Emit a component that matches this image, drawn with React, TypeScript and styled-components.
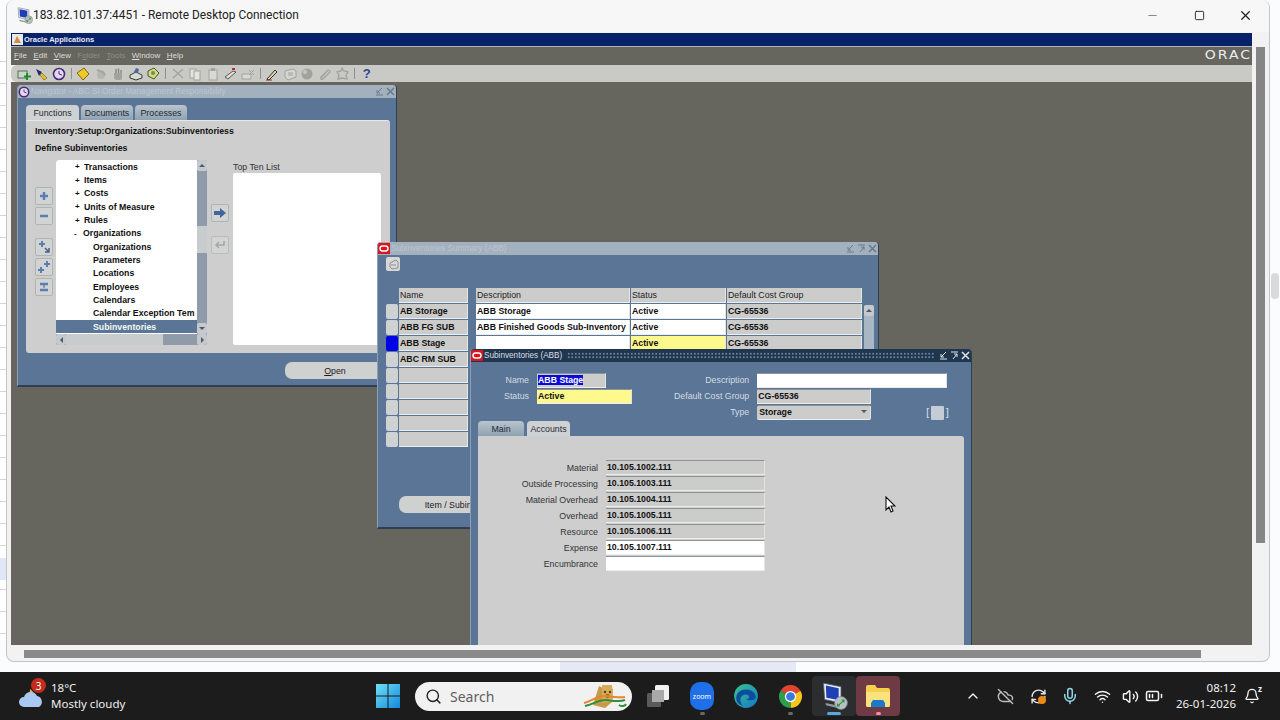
import React from 'react';
import styled, { createGlobalStyle } from 'styled-components';
import { ChevronUp, CloudOff, Mic, Minus, RefreshCw, Search, Square, Volume2, Wifi, X, BatteryMedium, Bell } from 'lucide-react';

const FORM_FONT = '"Liberation Sans", Arial, sans-serif';
const UI_FONT = '"Noto Sans", "Open Sans", sans-serif';

const TREE_ROWS = [
  { text: 'Transactions', kind: 'closed' },
  { text: 'Items', kind: 'closed' },
  { text: 'Costs', kind: 'closed' },
  { text: 'Units of Measure', kind: 'closed' },
  { text: 'Rules', kind: 'closed' },
  { text: 'Organizations', kind: 'open' },
  { text: 'Organizations', kind: 'child' },
  { text: 'Parameters', kind: 'child' },
  { text: 'Locations', kind: 'child' },
  { text: 'Employees', kind: 'child' },
  { text: 'Calendars', kind: 'child' },
  { text: 'Calendar Exception Tem', kind: 'child' },
  { text: 'Subinventories', kind: 'selected' },
];

const SUMMARY_ROWS = [
  { name: 'AB Storage', description: 'ABB Storage', status: 'Active', cost: 'CG-65536' },
  { name: 'ABB FG SUB', description: 'ABB Finished Goods Sub-Inventory', status: 'Active', cost: 'CG-65536' },
  { name: 'ABB Stage', description: '', status: 'Active', cost: 'CG-65536', current: true },
  { name: 'ABC RM SUB', description: '', status: '', cost: '' },
  { name: '', description: '', status: '', cost: '' },
  { name: '', description: '', status: '', cost: '' },
  { name: '', description: '', status: '', cost: '' },
  { name: '', description: '', status: '', cost: '' },
  { name: '', description: '', status: '', cost: '' },
];

const ACCOUNTS = [
  { label: 'Material', value: '10.105.1002.111' },
  { label: 'Outside Processing', value: '10.105.1003.111' },
  { label: 'Material Overhead', value: '10.105.1004.111' },
  { label: 'Overhead', value: '10.105.1005.111' },
  { label: 'Resource', value: '10.105.1006.111' },
  { label: 'Expense', value: '10.105.1007.111', editable: true },
  { label: 'Encumbrance', value: '', editable: true },
];

const TOOLBAR: (string | null)[] = ['new', 'torch', 'clock', null, 'folder', 'save', 'hand', 'print', 'tag', null, 'cut', 'copy', 'paste', 'pen', 'erase', null, 'edit', 'box', 'ball', 'clip', 'gear', null, 'help'];

function ToolGlyph({ name }: { name: string }) {
  const dim = '#a3a39d';
  const art: Record<string, React.ReactNode> = {
    new: (<><rect x="1" y="4" width="9" height="7" fill="#c8d8c8" stroke="#55705a" /><path d="M10 6v7M7 9.500h7" stroke="#1c8f2c" strokeWidth="2" /></>),
    torch: (<><path d="M2 2l6 3-3 4z" fill="#2a2a70" /><path d="M6 8l4 5 3-2-5-5z" fill="#e5c030" stroke="#6b5a10" strokeWidth=".6" /></>),
    clock: (<><circle cx="7" cy="7" r="5.500" fill="#e4d8ee" stroke="#4a2a78" strokeWidth="1.600" /><path d="M7 4v3l3 1" stroke="#4a2a78" fill="none" /></>),
    folder: (<><path d="M1 6l7-5 5 6-6 6z" fill="#f0c828" stroke="#7a6510" /></>),
    save: (<><circle cx="7" cy="8" r="4" fill="#b6b6b0" /><path d="M3 3l6 2 2 3" stroke={dim} strokeWidth="2" fill="none" /></>),
    hand: (<><path d="M3 6h8v5a2 2 0 0 1-2 2H6a3 3 0 0 1-3-3z" fill={dim} /><path d="M5 6V2M7.500 6V1.500M10 6V3" stroke="#8b8b85" strokeWidth="1.500" /></>),
    print: (<><path d="M1 8l6-3 6 3v3l-6 2-6-2z" fill="#d8d8d4" stroke="#3a3a3a" /><path d="M5 5l2-4 3 1-1 4z" fill="#4a68a8" /></>),
    tag: (<><path d="M2 4l6-3 5 5-5 6-6-3z" fill="#dcd878" stroke="#3c5a38" /><circle cx="7" cy="6" r="2" fill="#6a9060" /></>),
    cut: (<><path d="M2 2l10 9M12 2L2 11" stroke={dim} strokeWidth="1.300" /></>),
    copy: (<><rect x="2" y="2" width="6" height="9" fill="#e4e4e0" stroke={dim} /><rect x="6" y="4" width="6" height="9" fill="#e4e4e0" stroke={dim} /></>),
    paste: (<><rect x="3" y="3" width="8" height="10" fill="#d8d8d4" stroke={dim} /><rect x="5" y="1" width="4" height="3" fill={dim} /></>),
    pen: (<><path d="M2 10l8-6 3 1-8 7z" fill="#ece0a8" stroke="#55558a" /><path d="M9 2h3" stroke="#b03030" strokeWidth="2" /></>),
    erase: (<><path d="M1 7h9v5H1z" fill="#d8d8d4" stroke={dim} /><path d="M8 3l5 5M13 3L8 8" stroke={dim} /></>),
    edit: (<><path d="M2 12l8-9 2 2-8 8z" fill="#e0d48c" stroke="#30305a" /><path d="M1 13h6" stroke="#7a3a2a" /></>),
    box: (<><path d="M2 4l8-2 3 2v6l-8 3-3-3z" fill="#d4d4d0" stroke={dim} /><path d="M5 6h5M5 8h5" stroke={dim} /></>),
    ball: (<><circle cx="7" cy="7" r="5.500" fill="#a2a29c" /><circle cx="5" cy="5" r="2" fill="#c8c8c2" /></>),
    clip: (<><path d="M3 11l7-8a2 2 0 0 1 2 2l-7 7a1 1 0 0 1-2-2l6-6" stroke={dim} strokeWidth="1.200" fill="none" /></>),
    gear: (<><path d="M7 1l2 3 4 1-2 3 1 4-5-1-4 1 1-4-2-3 4-1z" fill="none" stroke={dim} strokeWidth="1.300" /></>),
  };
  return <svg width="14" height="14" viewBox="0 0 14 14">{art[name]}</svg>;
}

function TitleButtons({ full, dark }: { full?: boolean; dark?: boolean }) {
  const tone = dark ? '#dfe5ec' : '#697a8a';
  return (
    <TitleButtonRow>
      <svg width="9" height="9" viewBox="0 0 9 9"><path d="M1 8h7M2 6l5-5M2 6V3M2 6h3" stroke={tone} fill="none" /></svg>
      {full && <svg width="9" height="9" viewBox="0 0 9 9"><path d="M1 1h7M3 8l4-5M7 3v3M7 3H4" stroke={tone} fill="none" /></svg>}
      <svg width="9" height="9" viewBox="0 0 9 9"><path d="M1 1l7 7M8 1L1 8" stroke={tone} strokeWidth="1.500" /></svg>
    </TitleButtonRow>
  );
}

function OracleBadge() {
  return (
    <svg width="12" height="11" viewBox="0 0 12 11">
      <rect width="12" height="11" fill="#d8141e" />
      <rect x="2" y="3" width="8" height="5" rx="2.500" fill="none" stroke="#fff" strokeWidth="1.400" />
    </svg>
  );
}

function RdpGlyph({ size }: { size: number }) {
  return (
    <svg width={size} height={size} viewBox="0 0 24 24">
      <path d="M3 1l15 3v14L4 15z" fill="#e8eef5" stroke="#56606c" strokeWidth=".7" />
      <path d="M5 3l11 2.400v10L5.500 13.500z" fill="#1f3fb4" />
      <path d="M5 18l9 2v2l-9-2z" fill="#8e98a4" />
      <circle cx="18" cy="18" r="5.500" fill="#b8c0c4" stroke="#75807f" strokeWidth=".6" />
      <path d="M15.500 20l5-4M18.500 15.500h2v2M17 20.500h-2v-2" stroke="#2f8f3a" fill="none" strokeWidth="1" />
    </svg>
  );
}

function ScrollArrow({ dir }: { dir: 'up' | 'down' | 'left' | 'right' }) {
  return <ArrowBox><Caret $dir={dir} /></ArrowBox>;
}

function Navigator() {
  return (
    <NavigatorWindow>
      <WindowTitle>
        <svg width="12" height="12" viewBox="0 0 14 14"><circle cx="7" cy="7" r="5.500" fill="#e4d8ee" stroke="#4a2a78" strokeWidth="1.800" /><path d="M7 4v3l3 1" stroke="#4a2a78" fill="none" /></svg>
        <TitleText>Navigator - ABC SI Order Management Responsibility</TitleText>
        <TitleButtons />
      </WindowTitle>
      <NavBody>
        <TabRow>
          <Tab $active $width={53}>Functions</Tab>
          <Tab $width={52}>Documents</Tab>
          <Tab $width={52}>Processes</Tab>
        </TabRow>
        <NavPanel>
          <NavHeading>Inventory:Setup:Organizations:Subinventoriess</NavHeading>
          <NavHeading>Define Subinventories</NavHeading>
          <NavColumns>
            <SideButtons>
              <IconButton><svg width="10" height="10" viewBox="0 0 10 10"><path d="M5 1v8M1 5h8" stroke="#5b7db0" strokeWidth="2.500" /></svg></IconButton>
              <IconButton><svg width="10" height="10" viewBox="0 0 10 10"><path d="M1 5h8" stroke="#5b7db0" strokeWidth="2.500" /></svg></IconButton>
              <SideSpacer />
              <IconButton><svg width="14" height="14" viewBox="0 0 14 14"><path d="M5 1v6M2 4h6" stroke="#5b7db0" strokeWidth="2" /><path d="M8 8l4 4M12 8v4H8" stroke="#45638f" strokeWidth="1.500" fill="none" /></svg></IconButton>
              <IconButton><svg width="14" height="14" viewBox="0 0 14 14"><path d="M10 1v6M7 4h6M4 7v6M1 10h6" stroke="#5b7db0" strokeWidth="2" /></svg></IconButton>
              <IconButton><svg width="14" height="14" viewBox="0 0 14 14"><path d="M3 4h8M3 10h8" stroke="#5b7db0" strokeWidth="2.500" /><path d="M7 5v3" stroke="#45638f" /></svg></IconButton>
            </SideButtons>
            <TreeBox>
              <TreeMain>
                <TreeList>
                  {TREE_ROWS.map((row, i) => (
                    <TreeRow key={i} $kind={row.kind}>
                      {row.kind === 'closed' && <Marker>+</Marker>}
                      {row.kind === 'open' && <Marker>-</Marker>}
                      {row.text}
                    </TreeRow>
                  ))}
                </TreeList>
                <VerticalBar>
                  <ScrollArrow dir="up" />
                  <BarTrack />
                  <BarThumb />
                  <BarTrack $grow />
                  <ScrollArrow dir="down" />
                </VerticalBar>
              </TreeMain>
              <HorizontalBar>
                <ScrollArrow dir="left" />
                <HorizontalThumb />
                <ScrollArrow dir="right" />
              </HorizontalBar>
            </TreeBox>
            <MoveButtons>
              <IconButton><svg width="14" height="12" viewBox="0 0 14 12"><path d="M1 4h6V1l6 5-6 5V8H1z" fill="#41669c" /></svg></IconButton>
              <IconButton $dim><svg width="12" height="10" viewBox="0 0 12 10"><path d="M10 1v4H3M5 2L2 5l3 3" stroke="#a6a6a6" strokeWidth="1.500" fill="none" /></svg></IconButton>
            </MoveButtons>
            <TopTen>
              <TopTenLabel>Top Ten List</TopTenLabel>
              <TopTenBox />
            </TopTen>
          </NavColumns>
        </NavPanel>
        <NavFooter><PillButton $width={100}><u>O</u>pen</PillButton></NavFooter>
      </NavBody>
    </NavigatorWindow>
  );
}

function Summary() {
  return (
    <SummaryWindow>
      <WindowTitle>
        <OracleBadge />
        <TitleText>Subinventories Summary (ABB)</TitleText>
        <TitleButtons full />
      </WindowTitle>
      <SummaryBody>
        <FolderButton>
          <svg width="11" height="11" viewBox="0 0 11 11"><path d="M2 4l6-3 2 2v6l-6 1-2-2z" fill="#d8d8d8" stroke="#8e8e8e" /><path d="M3 6h5" stroke="#8e8e8e" /></svg>
        </FolderButton>
        <TableArea>
          <div>
            <TableRow>
              <span />
              <HeaderCell>Name</HeaderCell>
              <HeaderCell $spaced>Description</HeaderCell>
              <HeaderCell>Status</HeaderCell>
              <HeaderCell>Default Cost Group</HeaderCell>
            </TableRow>
            {SUMMARY_ROWS.map((row, i) => {
              const filled = i < 3;
              return (
                <TableRow key={i}>
                  <RowMark $current={row.current} />
                  <Cell $tone="gray">{row.name}</Cell>
                  {filled ? <Cell $spaced $tone="white">{row.description}</Cell> : <span />}
                  {filled ? <Cell $tone={row.current ? 'yellow' : 'white'}>{row.status}</Cell> : <span />}
                  {filled ? <Cell $tone="gray">{row.cost}</Cell> : <span />}
                </TableRow>
              );
            })}
          </div>
          <TableBar><ScrollArrow dir="up" /></TableBar>
        </TableArea>
        <ItemButton $width={134} $top={48}>Item / Subinventories</ItemButton>
      </SummaryBody>
    </SummaryWindow>
  );
}

function Detail() {
  return (
    <DetailWindow>
      <ActiveTitle>
        <OracleBadge />
        <ActiveTitleText>Subinventories (ABB)</ActiveTitleText>
        <Dots />
        <TitleButtons full dark />
      </ActiveTitle>
      <DetailBody>
        <TopForm>
          <FormColumn $width={172}>
            <FormRow>
              <FormLabel $width={58}>Name</FormLabel>
              <Field $width={69} $tone="gray"><Selected>ABB Stage</Selected></Field>
            </FormRow>
            <FormRow>
              <FormLabel $width={58}>Status</FormLabel>
              <Field $width={95} $tone="yellow">Active</Field>
            </FormRow>
          </FormColumn>
          <FormColumn $width={329}>
            <FormRow>
              <FormLabel $width={109}>Description</FormLabel>
              <Field $width={190} $tone="white" />
            </FormRow>
            <FormRow>
              <FormLabel $width={109}>Default Cost Group</FormLabel>
              <Field $width={114} $tone="gray">CG-65536</Field>
            </FormRow>
            <FormRow>
              <FormLabel $width={109}>Type</FormLabel>
              <SelectField $width={114} $tone="gray">Storage<Caret $dir="down" /></SelectField>
              <FlexBracket>[<FlexBox />]</FlexBracket>
            </FormRow>
          </FormColumn>
        </TopForm>
        <DetailTabs>
          <Tab $width={46}>Main</Tab>
          <Tab $active $width={43}>Accounts</Tab>
        </DetailTabs>
        <AccountsPanel>
          {ACCOUNTS.map(a => (
            <FormRow key={a.label}>
              <PanelLabel>{a.label}</PanelLabel>
              <Field $width={159} $tone={a.editable ? 'white' : 'gray'}>{a.value}</Field>
            </FormRow>
          ))}
        </AccountsPanel>
      </DetailBody>
    </DetailWindow>
  );
}

function Taskbar() {
  return (
    <Bar>
      <Weather>
        <WeatherIcon>
          <svg width="28" height="28" viewBox="0 0 28 28">
            <path d="M3 17c5 0 9-4 9-10 3 2 5 5 4 9z" fill="#f0b030" />
            <path d="M6 25a5 5 0 0 1 0-10 7 7 0 0 1 13-1 6 6 0 0 1 2 11z" fill="#a9c9f2" />
          </svg>
          <WeatherBadge>3</WeatherBadge>
        </WeatherIcon>
        <WeatherText>
          <span>18°C</span>
          <span>Mostly cloudy</span>
        </WeatherText>
      </Weather>
      <svg width="24" height="24" viewBox="0 0 24 24">
        <defs><linearGradient id="win" x1="0" y1="0" x2="1" y2="1"><stop offset="0" stopColor="#6fe0f5" /><stop offset="1" stopColor="#1488dc" /></linearGradient></defs>
        <path d="M0 0h11.500v11.500H0zM12.500 0H24v11.500H12.500zM0 12.500h11.500V24H0zM12.500 12.500H24V24H12.500z" fill="url(#win)" />
      </svg>
      <SearchPill>
        <Search size={17} color="#222" strokeWidth={2} />
        <SearchText>Search</SearchText>
        <svg width="46" height="27" viewBox="0 0 46 27">
          <path d="M17 3l4 2 5-1 5 2-1 13-7 6-12-3z" fill="#c69a48" />
          <path d="M20 2h10l1 16-11 2z" fill="#d6ac5a" />
          <circle cx="23" cy="9" r="1.200" fill="#5d3f18" /><circle cx="28" cy="9" r="1.200" fill="#5d3f18" /><circle cx="25.500" cy="13" r="2" fill="#8a5d25" />
          <path d="M2 20c8-2 14-8 22-7 7 1 14 2 19 1" stroke="#e8862c" strokeWidth="2" fill="none" />
          <path d="M3 23c9-2 14-7 22-6 7 1 13 2 18 0" stroke="#2f8f3a" strokeWidth="2" fill="none" />
          <path d="M37 22c3 2 6 1 7-1" stroke="#2f8f3a" strokeWidth="2" fill="none" />
        </svg>
      </SearchPill>
      <Apps>
        <AppSlot>
          <svg width="24" height="24" viewBox="0 0 24 24">
            <rect x="1" y="9" width="14" height="14" rx="1.500" fill="#5a5a5a" />
            <rect x="9" y="1" width="14" height="15" rx="1.500" fill="#f2f2f2" />
            <rect x="6" y="6" width="12" height="12" fill="#a9a9a9" />
          </svg>
        </AppSlot>
        <AppSlot $pip="#6a6a6a">
          <ZoomTile>zoom</ZoomTile>
        </AppSlot>
        <AppSlot>
          <svg width="26" height="26" viewBox="0 0 24 24">
            <defs><linearGradient id="edge" x1="0" y1="0" x2="1" y2="1"><stop offset="0" stopColor="#38c58e" /><stop offset="1" stopColor="#1578c9" /></linearGradient></defs>
            <circle cx="12" cy="12" r="11" fill="url(#edge)" />
            <path d="M3 14c0-5 4-8 9-8 5 0 9 3 9 7 0 2-2 3-5 3-2 0-4-1-4-1 2 0 3-1 3-2 0-2-3-3-5-2-4 1-4 6-1 10-3-1-6-3-6-7z" fill="#0e4c9c" />
          </svg>
        </AppSlot>
        <AppSlot $pip="#6a6a6a">
          <svg width="25" height="25" viewBox="0 0 24 24">
            <path d="M12 12L2.470 6.500A11 11 0 0 1 21.530 6.500Z" fill="#e0432f" />
            <path d="M12 12L21.530 6.500A11 11 0 0 1 12 23Z" fill="#f7c51c" />
            <path d="M12 12L12 23A11 11 0 0 1 2.470 6.500Z" fill="#2f9e4c" />
            <circle cx="12" cy="12" r="5.400" fill="#fff" /><circle cx="12" cy="12" r="4.200" fill="#3b78e0" />
          </svg>
        </AppSlot>
        <AppSlot $tile="#2b2d2f" $pip="#5aa8dc" $wide>
          <RdpGlyph size={28} />
        </AppSlot>
        <AppSlot $tile="#6e3b44" $pip="#f08fa8">
          <svg width="26" height="24" viewBox="0 0 26 24">
            <path d="M1 3a2 2 0 0 1 2-2h7l2 3h11a2 2 0 0 1 2 2v15a2 2 0 0 1-2 2H3a2 2 0 0 1-2-2z" fill="#f6cf4c" />
            <path d="M1 8h24v13a2 2 0 0 1-2 2H3a2 2 0 0 1-2-2z" fill="#fbe27c" />
            <path d="M8 16h10l2 3v4H6v-4z" fill="#1a79c8" />
          </svg>
        </AppSlot>
      </Apps>
      <Tray>
        <TraySlot $width={32}><ChevronUp size={16} color="#f2f2f2" /></TraySlot>
        <TraySlot $width={33}><CloudOff size={17} color="#bdbdbd" /></TraySlot>
        <TraySlot $width={32}><RefreshCw size={17} color="#e6e6e6" /><SyncDot /></TraySlot>
        <TraySlot $width={32}><Mic size={18} color="#8fd8e8" /></TraySlot>
        <TraySlot $width={32}><Wifi size={17} color="#f2f2f2" /></TraySlot>
        <TraySlot $width={24}><Volume2 size={17} color="#f2f2f2" /></TraySlot>
        <TraySlot $width={24}><BatteryMedium size={18} color="#f2f2f2" /></TraySlot>
      </Tray>
      <Clock>
        <span>08:12</span>
        <span>26-01-2026</span>
      </Clock>
      <TraySlot $width={28}><Bell size={16} color="#f2f2f2" /><BellMark>z</BellMark></TraySlot>
    </Bar>
  );
}

export default function App() {
  return (
    <Screen>
      <GlobalStyle />
      <Desktop>
        <SheetTicks><SheetCell /></SheetTicks>
        <PageThumb />
        <BottomTint />
        <RdpWindow>
          <RdpTitle>
            <RdpGlyph size={17} />
            <RdpCaption>183.82.101.37:4451 - Remote Desktop Connection</RdpCaption>
            <RdpControls>
              <RdpControl><Minus size={13} color="#8a8a8a" /></RdpControl>
              <RdpControl><Square size={11} color="#222" /></RdpControl>
              <RdpControl><X size={15} color="#222" /></RdpControl>
            </RdpControls>
          </RdpTitle>
          <RdpClient>
            <Viewport>
              <OracleTitle>
                <svg width="11" height="11" viewBox="0 0 11 11"><rect width="11" height="11" fill="#e8e8e8" /><path d="M2 9l3-7 4 7z" fill="#d68a3c" /></svg>
                Oracle Applications
              </OracleTitle>
              <MenuBar>
                <MenuItem><u>F</u>ile</MenuItem>
                <MenuItem><u>E</u>dit</MenuItem>
                <MenuItem><u>V</u>iew</MenuItem>
                <MenuItem $dim>F<u>o</u>lder</MenuItem>
                <MenuItem $dim><u>T</u>ools</MenuItem>
                <MenuItem><u>W</u>indow</MenuItem>
                <MenuItem><u>H</u>elp</MenuItem>
                <OracleLogo>ORAC</OracleLogo>
              </MenuBar>
              <Toolbar>
                {TOOLBAR.map((name, i) =>
                  name === null ? <ToolSeparator key={i} /> :
                  name === 'help' ? <ToolSlot key={i}><HelpMark>?</HelpMark></ToolSlot> :
                  <ToolSlot key={i}><ToolGlyph name={name} /></ToolSlot>
                )}
              </Toolbar>
              <Canvas>
                <Navigator />
                <Summary />
                <Detail />
                <Pointer>
                  <svg width="11" height="17" viewBox="0 0 11 17"><path d="M1 1v13l3-3 2 5 2-1-2-5h4z" fill="#fff" stroke="#111" strokeWidth="1.100" /></svg>
                </Pointer>
              </Canvas>
            </Viewport>
            <VerticalGutter><GutterBar /></VerticalGutter>
          </RdpClient>
          <HorizontalGutter><GutterBarWide /></HorizontalGutter>
        </RdpWindow>
      </Desktop>
      <Taskbar />
    </Screen>
  );
}

const GlobalStyle = createGlobalStyle`
  html, body { margin: 0; padding: 0; background: #fff; }
  body { font-family: ${FORM_FONT}; overflow: hidden; }
  * { box-sizing: border-box; }
`;

const Screen = styled.div`
  width: 1280px;
  height: 720px;
  display: flex;
  flex-direction: column;
  overflow: hidden;
`;

const Desktop = styled.div`
  position: relative;
  height: 672px;
  background: #fbfcfd;
`;

const SheetTicks = styled.div`
  position: absolute;
  left: 0;
  top: 40px;
  width: 8px;
  height: 600px;
  background: repeating-linear-gradient(to bottom, #fff 0 21px, #d6d6d6 21px 22px);
`;

const SheetCell = styled.div`
  position: absolute;
  left: 0;
  top: 518px;
  width: 8px;
  height: 22px;
  background: #dfe6f8;
`;

const PageThumb = styled.div`
  position: absolute;
  left: 1271px;
  top: 273px;
  width: 8px;
  height: 26px;
  border-radius: 4px;
  background: #d8dadc;
`;

const BottomTint = styled.div`
  position: absolute;
  left: 560px;
  top: 662px;
  width: 236px;
  height: 10px;
  background: #e4e9f5;
`;

const RdpWindow = styled.div`
  position: relative;
  margin-left: 6px;
  width: 1264px;
  height: 662px;
  display: flex;
  flex-direction: column;
  background: #f2f2f2;
  border: 1px solid #c4c4c4;
  border-top: 0;
  border-radius: 8px;
  overflow: hidden;
`;

const RdpTitle = styled.div`
  height: 32px;
  flex: none;
  display: flex;
  align-items: center;
  padding: 0 0 2px 9px;
  background: #f7f7f7;
`;

const RdpCaption = styled.span`
  font: 11.900px Roboto, ${UI_FONT};
  color: #222;
`;

const RdpControls = styled.div`
  margin-left: auto;
  display: flex;
`;

const RdpControl = styled.span`
  width: 46.500px;
  height: 30px;
  display: flex;
  align-items: center;
  justify-content: center;
`;

const RdpClient = styled.div`
  flex: 1;
  min-height: 0;
  display: flex;
  padding-left: 4px;
`;

const Viewport = styled.div`
  width: 1241px;
  display: flex;
  flex-direction: column;
`;

const VerticalGutter = styled.div`
  flex: 1;
  padding: 15px 0 0 4px;
`;

const GutterBar = styled.div`
  width: 9px;
  height: 496px;
  background: #858585;
`;

const HorizontalGutter = styled.div`
  height: 16px;
  flex: none;
  padding: 5px 0 0 17px;
`;

const GutterBarWide = styled.div`
  width: 1177px;
  height: 8px;
  background: #8a8a8a;
`;

const OracleTitle = styled.div`
  height: 13px;
  flex: none;
  margin-top: 1px;
  display: flex;
  align-items: center;
  gap: 1px;
  padding-left: 1px;
  background: #08226a;
  color: #e8ecf5;
  font: bold 7.500px ${FORM_FONT};
`;

const MenuBar = styled.div`
  height: 19px;
  flex: none;
  display: flex;
  align-items: center;
  border-top: 1px solid #b4b4b0;
  padding: 0 0 2px 3px;
  background: #66665f;
  overflow: hidden;
`;

const MenuItem = styled.span<{ $dim?: boolean }>`
  margin-right: 6.500px;
  font: 8px ${FORM_FONT};
  color: ${p => (p.$dim ? '#8e8e88' : '#dcdcd8')};
`;

const OracleLogo = styled.span`
  margin-left: auto;
  font: 14px "DejaVu Sans", sans-serif;
  letter-spacing: 2px;
  color: #eceff0;
  transform: scaleY(0.85);
`;

const Toolbar = styled.div`
  height: 17px;
  flex: none;
  display: flex;
  align-items: center;
  padding-left: 4px;
  background: #c9c9c5;
  border-radius: 6px 0 0 6px;
`;

const ToolSlot = styled.span`
  width: 17.500px;
  height: 15px;
  flex: none;
  display: flex;
  align-items: center;
  justify-content: center;
`;

const ToolSeparator = styled.span`
  width: 1px;
  height: 11px;
  flex: none;
  margin: 0 3px;
  background: #92928c;
`;

const HelpMark = styled.span`
  font: bold 13px ${FORM_FONT};
  color: #28489a;
`;

const Canvas = styled.div`
  position: relative;
  flex: 1;
  min-height: 0;
  background: #66665f;
  overflow: hidden;
`;

const Pointer = styled.div`
  position: absolute;
  left: 874px;
  top: 414px;
  height: 17px;
`;

const BaseWindow = styled.div`
  position: absolute;
  display: flex;
  flex-direction: column;
  background: #5a7595;
  border-radius: 4px 4px 0 0;
  border-right: 1px solid #2e3f52;
  border-bottom: 2px solid #2e3f52;
  border-left: 1px solid #8b9fb5;
  overflow: hidden;
`;

const NavigatorWindow = styled(BaseWindow)`
  left: 6px;
  top: 3px;
  width: 380px;
  height: 302px;
`;

const SummaryWindow = styled(BaseWindow)`
  left: 366px;
  top: 160px;
  width: 502px;
  height: 287px;
`;

const DetailWindow = styled(BaseWindow)`
  left: 459px;
  top: 267px;
  width: 502px;
  height: 320px;
  border-bottom: 0;
`;

const WindowTitle = styled.div`
  height: 13px;
  flex: none;
  display: flex;
  align-items: center;
  gap: 1px;
  padding-right: 1px;
  background: #a3b1bf;
`;

const ActiveTitle = styled(WindowTitle)`
  background: #20364f;
`;

const TitleText = styled.span`
  font: 8.200px ${FORM_FONT};
  color: #bcc6d0;
`;

const ActiveTitleText = styled(TitleText)`
  color: #d8dfe6;
`;

const Dots = styled.span`
  flex: 1;
  height: 7px;
  margin: 0 4px;
  background-image: radial-gradient(circle, #71849a 0.7px, transparent 0.9px);
  background-size: 3.500px 3.500px;
`;

const TitleButtonRow = styled.span`
  margin-left: auto;
  display: flex;
  align-items: center;
  gap: 2px;
`;

const NavBody = styled.div`
  flex: 1;
  padding: 7px 6px 0 8px;
  display: flex;
  flex-direction: column;
`;

const TabRow = styled.div`
  height: 15px;
  flex: none;
  display: flex;
  gap: 2px;
`;

const Tab = styled.span<{ $active?: boolean; $width: number }>`
  width: ${p => p.$width}px;
  height: 15px;
  display: flex;
  align-items: center;
  justify-content: center;
  border-radius: 4px 4px 0 0;
  font: 8.800px ${FORM_FONT};
  color: #1f2a35;
  background: ${p => (p.$active ? '#cfd2d3' : 'linear-gradient(#b9c4cc, #8fa2b3)')};
`;

const NavPanel = styled.div`
  height: 233px;
  flex: none;
  padding: 5px 9px 0;
  background: #cdcecd;
  border-radius: 0 3px 3px 3px;
  border-top: 1px solid #e4e8ea;
`;

const NavHeading = styled.div`
  height: 16.500px;
  font: bold 8.750px/11px ${FORM_FONT};
  color: #111;
`;

const NavColumns = styled.div`
  margin-top: 1px;
  display: grid;
  grid-template-columns: 17px 151px 18px 148px;
  column-gap: 4px;
`;

const SideButtons = styled.div`
  padding-top: 27px;
  display: flex;
  flex-direction: column;
  gap: 2px;
`;

const SideSpacer = styled.div`
  height: 9px;
`;

const IconButton = styled.span<{ $dim?: boolean }>`
  width: 18px;
  height: 18px;
  display: flex;
  align-items: center;
  justify-content: center;
  background: #d2d3d3;
  border: 1px solid ${p => (p.$dim ? '#bbbcbc' : '#b2b3b3')};
  border-radius: 2px;
`;

const TreeBox = styled.div`
  height: 185px;
  display: flex;
  flex-direction: column;
  background: #8f9ba8;
  border-radius: 3px;
  overflow: hidden;
`;

const TreeMain = styled.div`
  flex: 1;
  min-height: 0;
  display: flex;
`;

const TreeList = styled.div`
  width: 141px;
  background: #fff;
  overflow: hidden;
`;

const TreeRow = styled.div<{ $kind: string }>`
  height: 13.350px;
  display: flex;
  align-items: center;
  white-space: nowrap;
  overflow: hidden;
  padding-left: ${p => (p.$kind === 'closed' ? 19 : p.$kind === 'open' ? 18 : 37)}px;
  font: bold 8.750px ${FORM_FONT};
  color: ${p => (p.$kind === 'selected' ? '#f4f6f8' : '#111')};
  background: ${p => (p.$kind === 'selected' ? '#5a7595' : 'transparent')};
`;

const Marker = styled.span`
  width: 9px;
  flex: none;
  font: bold 8px ${FORM_FONT};
`;

const VerticalBar = styled.div`
  width: 10px;
  display: flex;
  flex-direction: column;
`;

const ArrowBox = styled.span`
  width: 10px;
  height: 11px;
  flex: none;
  display: flex;
  align-items: center;
  justify-content: center;
  background: #c4c9cd;
  border-radius: 2px;
`;

const Caret = styled.i<{ $dir: string }>`
  width: 0;
  height: 0;
  display: block;
  border-style: solid;
  border-color: transparent;
  ${p => p.$dir === 'up' && 'border-width: 0 3px 3px; border-bottom-color: #556;'}
  ${p => p.$dir === 'down' && 'border-width: 3px 3px 0; border-top-color: #556;'}
  ${p => p.$dir === 'left' && 'border-width: 3px 3px 3px 0; border-right-color: #556;'}
  ${p => p.$dir === 'right' && 'border-width: 3px 0 3px 3px; border-left-color: #556;'}
`;

const BarTrack = styled.div<{ $grow?: boolean }>`
  height: 55px;
  flex: ${p => (p.$grow ? 1 : 'none')};
  background: #8f9ba8;
`;

const BarThumb = styled.div`
  height: 27px;
  flex: none;
  background: #c9cccc;
`;

const HorizontalBar = styled.div`
  height: 11px;
  flex: none;
  display: flex;
  justify-content: space-between;
  background: #8f9ba8;
`;

const HorizontalThumb = styled.div`
  width: 97px;
  margin-right: auto;
  background: #c9cccc;
`;

const MoveButtons = styled.div`
  padding-top: 44px;
  display: flex;
  flex-direction: column;
  gap: 14px;
`;

const TopTen = styled.div`
  display: flex;
  flex-direction: column;
`;

const TopTenLabel = styled.div`
  height: 13px;
  font: 8.800px/14px ${FORM_FONT};
  color: #333;
`;

const TopTenBox = styled.div`
  height: 172px;
  background: #fff;
  border-radius: 2px;
`;

const NavFooter = styled.div`
  margin-top: 9px;
  display: flex;
  justify-content: flex-end;
  padding-right: 5px;
`;

const PillButton = styled.span<{ $width: number; $top?: number }>`
  width: ${p => p.$width}px;
  height: 17px;
  margin-top: ${p => p.$top ?? 0}px;
  display: flex;
  align-items: center;
  justify-content: center;
  flex: none;
  border-radius: 7px;
  font: 8.800px ${FORM_FONT};
  color: #1b1b1b;
  background: #cfd0d0;
`;

const ItemButton = styled(PillButton)`
  margin-left: 13px;
`;

const SummaryBody = styled.div`
  flex: 1;
  padding: 2px 0 0 8px;
  display: flex;
  flex-direction: column;
  align-items: flex-start;
`;

const FolderButton = styled.span`
  width: 14px;
  height: 14px;
  display: flex;
  align-items: center;
  justify-content: center;
  background: #d6d8d8;
  border-radius: 2px;
`;

const TableArea = styled.div`
  margin-top: 17px;
  display: flex;
  gap: 2px;
`;

const TableRow = styled.div`
  height: 16px;
  display: grid;
  grid-template-columns: 12px 69px 161px 95px 135px;
  column-gap: 1px;
`;

const Bevel = styled.span<{ $spaced?: boolean }>`
  height: 15px;
  display: flex;
  align-items: center;
  padding-left: 1px;
  white-space: nowrap;
  overflow: hidden;
  margin-left: ${p => (p.$spaced ? 7 : 0)}px;
  font: 8.800px ${FORM_FONT};
  color: #222;
  background: #cccccb;
  border-bottom: 1px solid #eceded;
  border-right: 1px solid #e4e5e5;
`;

const HeaderCell = styled(Bevel)`
  border-top: 0;
`;

const toneColor = (tone: string) => (tone === 'white' ? '#fff' : tone === 'yellow' ? '#fdf98c' : '#cccccb');

const Cell = styled(Bevel)<{ $tone: string }>`
  font-weight: bold;
  font-size: 8.750px;
  color: #111;
  background: ${p => toneColor(p.$tone)};
`;

const RowMark = styled.span<{ $current?: boolean }>`
  height: 15px;
  border-radius: 2px;
  background: ${p => (p.$current ? '#0202e6' : '#cfd2d3')};
`;

const TableBar = styled.div`
  width: 10px;
  margin-top: 17px;
  height: 142px;
  background: #a9b6c3;
  border-radius: 3px 3px 0 0;
`;

const DetailBody = styled.div`
  flex: 1;
  padding: 11px 7px 0;
  display: flex;
  flex-direction: column;
`;

const TopForm = styled.div`
  display: flex;
  height: 48px;
  flex: none;
  margin-left: -7px;
`;

const FormColumn = styled.div<{ $width: number }>`
  width: ${p => p.$width}px;
`;

const FormRow = styled.div`
  height: 16px;
  display: flex;
  align-items: flex-start;
  gap: 8px;
`;

const FormLabel = styled.span<{ $width: number }>`
  width: ${p => p.$width}px;
  flex: none;
  text-align: right;
  white-space: nowrap;
  font: 8.800px/15px ${FORM_FONT};
  color: #d4dbe3;
`;

const PanelLabel = styled.span`
  width: 120px;
  flex: none;
  text-align: right;
  white-space: nowrap;
  font: 8.800px/16px ${FORM_FONT};
  color: #333;
`;

const Field = styled.span<{ $width: number; $tone: string }>`
  width: ${p => p.$width}px;
  height: 15px;
  flex: none;
  display: flex;
  align-items: center;
  padding: 0 0 2px 1px;
  font: bold 8.750px ${FORM_FONT};
  color: #111;
  background: ${p => toneColor(p.$tone)};
  border-top: 1px solid #8f9396;
  border-bottom: 1px solid #ecedee;
  border-right: 1px solid #e2e3e4;
`;

const SelectField = styled(Field)`
  justify-content: space-between;
  padding: 0 3px 2px 2px;
  border-radius: 2px;
`;

const Selected = styled.span`
  background: #0a0ad8;
  color: #fff;
`;

const FlexBracket = styled.span`
  margin-left: 47px;
  display: flex;
  align-items: center;
  gap: 2px;
  font: 10px/15px ${FORM_FONT};
  color: #dfe5ec;
`;

const FlexBox = styled.span`
  width: 13px;
  height: 14px;
  background: #c4cdd6;
  border-radius: 1px;
`;

const DetailTabs = styled.div`
  height: 15px;
  flex: none;
  display: flex;
  gap: 3px;
`;

const AccountsPanel = styled.div`
  flex: 1;
  padding-top: 24px;
  background: #cdcecd;
  border-radius: 0 3px 0 0;
`;

const Bar = styled.div`
  height: 48px;
  flex: none;
  display: flex;
  align-items: center;
  padding: 0 14px 0 18px;
  background: #1c1c1c;
`;

const Weather = styled.div`
  width: 358px;
  flex: none;
  display: flex;
  align-items: center;
  gap: 5px;
`;

const WeatherIcon = styled.div`
  position: relative;
  width: 28px;
  height: 28px;
`;

const WeatherBadge = styled.span`
  position: absolute;
  left: 13px;
  top: -4px;
  width: 15px;
  height: 15px;
  border-radius: 50%;
  display: flex;
  align-items: center;
  justify-content: center;
  font: 10px ${UI_FONT};
  color: #fff;
  background: #c42b1c;
`;

const WeatherText = styled.div`
  display: flex;
  flex-direction: column;
  font: 11.500px/16px ${UI_FONT};
  color: #f0f0f0;
`;

const SearchPill = styled.div`
  width: 217px;
  height: 29px;
  flex: none;
  margin-left: 15px;
  padding: 0 4px 0 10px;
  display: flex;
  align-items: center;
  border-radius: 15px;
  background: #f1f1f1;
`;

const SearchText = styled.span`
  flex: 1;
  margin-left: 8px;
  font: 14px ${UI_FONT};
  color: #5f5f5f;
`;

const Apps = styled.div`
  margin-left: 4px;
  display: flex;
`;

const AppSlot = styled.div<{ $tile?: string; $pip?: string; $wide?: boolean }>`
  position: relative;
  width: 44px;
  height: 40px;
  flex: none;
  display: flex;
  align-items: center;
  justify-content: center;
  border-radius: 4px;
  background: ${p => p.$tile ?? 'transparent'};
  &::after {
    content: '';
    display: ${p => (p.$pip ? 'block' : 'none')};
    position: absolute;
    bottom: 1px;
    left: 50%;
    width: ${p => (p.$wide ? 14 : 5)}px;
    height: 3px;
    margin-left: ${p => (p.$wide ? -7 : -2.5)}px;
    border-radius: 2px;
    background: ${p => p.$pip};
  }
`;

const ZoomTile = styled.span`
  width: 24px;
  height: 28px;
  display: flex;
  align-items: center;
  justify-content: center;
  border-radius: 10px;
  background: #1f6fe8;
  font: 7px ${UI_FONT};
  color: #fff;
`;

const Tray = styled.div`
  margin-left: 57px;
  display: flex;
`;

const TraySlot = styled.span<{ $width: number }>`
  position: relative;
  width: ${p => p.$width}px;
  height: 28px;
  flex: none;
  display: flex;
  align-items: center;
  justify-content: center;
`;

const SyncDot = styled.i`
  position: absolute;
  right: 8px;
  bottom: 6px;
  width: 8px;
  height: 8px;
  border-radius: 50%;
  background: #f08a12;
`;

const BellMark = styled.i`
  position: absolute;
  right: 4px;
  top: 1px;
  font: bold 8px ${UI_FONT};
  color: #f2f2f2;
`;

const Clock = styled.div`
  margin-left: auto;
  margin-right: 2px;
  display: flex;
  flex-direction: column;
  align-items: flex-end;
  font: 11.500px/16px ${UI_FONT};
  color: #f0f0f0;
`;
